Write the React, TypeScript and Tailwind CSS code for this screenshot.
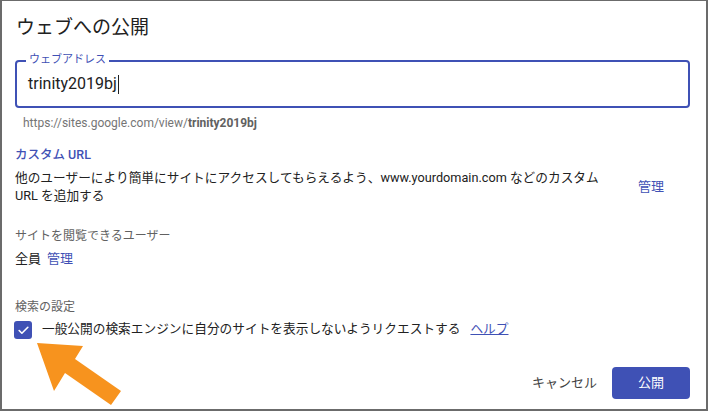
import { Check } from "lucide-react";

const blue = "text-[#3f51b5]";

export default function App() {
  return (
    <div
      className="relative w-[708px] h-[411px] bg-white border-l-2 border-r-2 border-b-2 border-t border-[#6b6b6b] overflow-hidden pl-[13px] pr-[16px] pt-[13px]"
      style={{ fontFamily: 'Roboto, "Noto Sans CJK JP", sans-serif' }}
    >
      <h1 className="text-[19px] leading-[28px] text-[#212121] pl-px">ウェブへの公開</h1>

      {/* web address field */}
      <div className="relative mt-[18px] h-[48px] rounded-[4px] border-2 border-[#3f51b5] flex items-center pl-[11px]">
        <span className={`absolute -top-[9px] left-[9px] bg-white px-[3px] text-[11px] leading-[14px] ${blue}`}>
          ウェブアドレス
        </span>
        <span className="text-[16px] leading-[20px] text-[#212121]">trinity2019bj</span>
        <span className="w-px h-[19px] bg-[#212121] ml-px" />
      </div>
      <p className="mt-[7px] pl-[8px] text-[12px] leading-[16px] text-[#757575]">
        https://sites.google.com/view/<span className="font-bold text-[#616161]">trinity2019bj</span>
      </p>

      <p className={`mt-[15px] text-[12.5px] leading-[18px] font-medium ${blue}`}>カスタム URL</p>
      <div className="mt-[5px] flex items-center justify-between">
        <p className="w-[600px] text-[12.7px] leading-[18px] text-[#212121]">
          他のユーザーにより簡単にサイトにアクセスしてもらえるよう、www.yourdomain.com などのカスタム URL を追加する
        </p>
        <button className={`pr-[26px] text-[13px] leading-[18px] ${blue}`}>管理</button>
      </div>

      <p className="mt-[23px] text-[12px] leading-[16px] text-[#616161]">サイトを閲覧できるユーザー</p>
      <div className="mt-[6px] flex items-center gap-[6px] text-[13px] leading-[18px]">
        <span className="text-[#212121]">全員</span>
        <span className={blue}>管理</span>
      </div>

      <p className="mt-[31px] text-[12px] leading-[16px] text-[#616161]">検索の設定</p>
      <div className="mt-[6px] -ml-px flex items-center">
        <span className="w-[18px] h-[18px] rounded-[3px] bg-[#3f51b5] flex items-center justify-center">
          <Check className="w-[13px] h-[13px] text-white" strokeWidth={3} />
        </span>
        <span className="ml-[10px] text-[12.7px] leading-[18px] text-[#212121] -mt-[3px]">
          一般公開の検索エンジンに自分のサイトを表示しないようリクエストする
        </span>
        <a className={`ml-[10px] text-[12.7px] leading-[18px] underline -mt-[3px] ${blue}`}>ヘルプ</a>
      </div>

      <div className="mt-[28px] flex items-center justify-end gap-[15px]">
        <button className="text-[13px] leading-[18px] text-[#424242]">キャンセル</button>
        <button className="w-[78px] h-[32px] rounded-[4px] bg-[#3f51b5] text-white text-[13px]">公開</button>
      </div>

      <svg className="absolute left-0 top-0 pointer-events-none" width="708" height="411">
        <polygon
          points="35,342 81,345 73,358 119,390 109,404 63,372 52,390"
          fill="#f7931e"
        />
      </svg>
    </div>
  );
}
